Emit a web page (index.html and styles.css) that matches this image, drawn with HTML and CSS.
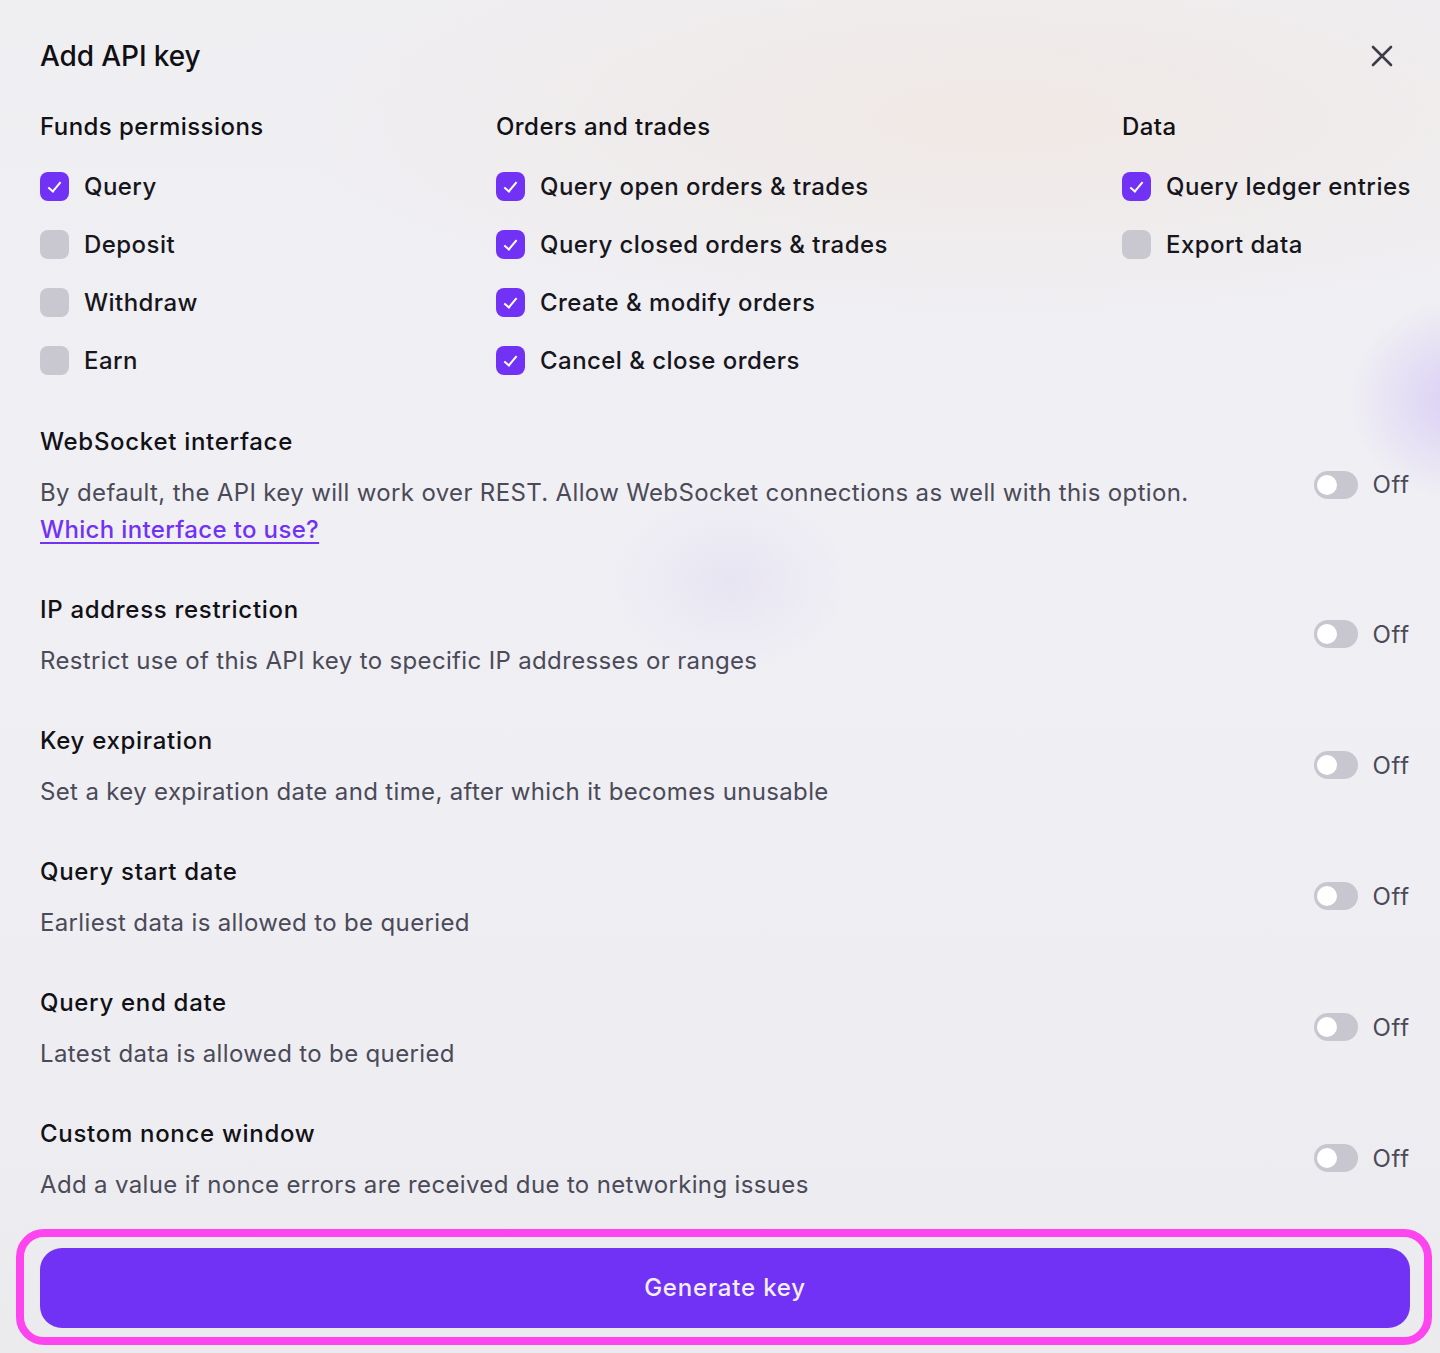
FILE: index.html
```html
<!DOCTYPE html>
<html lang="en">
<head>
<meta charset="utf-8">
<title>Add API key</title>
<link rel="stylesheet" href="styles.css">
</head>
<body>
<div class="modal">
  <header class="modal-header">
    <h1 class="modal-title">Add API key</h1>
    <button class="close" aria-label="Close">
      <svg width="22" height="22" viewBox="0 0 22 22"><path d="M2 2 L20 20 M20 2 L2 20" stroke="#3d3c4a" stroke-width="2.6" stroke-linecap="round" fill="none"/></svg>
    </button>
  </header>

  <div class="perms">
    <div class="col">
      <h2 class="col-title">Funds permissions</h2>
      <ul class="checks">
        <li><span class="cb on"></span>Query</li>
        <li><span class="cb"></span>Deposit</li>
        <li><span class="cb"></span>Withdraw</li>
        <li><span class="cb"></span>Earn</li>
      </ul>
    </div>
    <div class="col">
      <h2 class="col-title">Orders and trades</h2>
      <ul class="checks">
        <li><span class="cb on"></span>Query open orders &amp; trades</li>
        <li><span class="cb on"></span>Query closed orders &amp; trades</li>
        <li><span class="cb on"></span>Create &amp; modify orders</li>
        <li><span class="cb on"></span>Cancel &amp; close orders</li>
      </ul>
    </div>
    <div class="col">
      <h2 class="col-title">Data</h2>
      <ul class="checks">
        <li><span class="cb on"></span>Query ledger entries</li>
        <li><span class="cb"></span>Export data</li>
      </ul>
    </div>
  </div>

  <div class="settings">
    <section class="setting">
      <div class="setting-text">
        <h3 class="setting-title">WebSocket interface</h3>
        <p class="setting-desc">By default, the API key will work over REST. Allow WebSocket connections as well with this option.<br><a href="#" class="link">Which interface to use?</a></p>
      </div>
      <div class="toggle-wrap"><span class="toggle"></span><span class="toggle-label">Off</span></div>
    </section>
    <section class="setting">
      <div class="setting-text">
        <h3 class="setting-title">IP address restriction</h3>
        <p class="setting-desc">Restrict use of this API key to specific IP addresses or ranges</p>
      </div>
      <div class="toggle-wrap"><span class="toggle"></span><span class="toggle-label">Off</span></div>
    </section>
    <section class="setting">
      <div class="setting-text">
        <h3 class="setting-title">Key expiration</h3>
        <p class="setting-desc">Set a key expiration date and time, after which it becomes unusable</p>
      </div>
      <div class="toggle-wrap"><span class="toggle"></span><span class="toggle-label">Off</span></div>
    </section>
    <section class="setting">
      <div class="setting-text">
        <h3 class="setting-title">Query start date</h3>
        <p class="setting-desc">Earliest data is allowed to be queried</p>
      </div>
      <div class="toggle-wrap"><span class="toggle"></span><span class="toggle-label">Off</span></div>
    </section>
    <section class="setting">
      <div class="setting-text">
        <h3 class="setting-title">Query end date</h3>
        <p class="setting-desc">Latest data is allowed to be queried</p>
      </div>
      <div class="toggle-wrap"><span class="toggle"></span><span class="toggle-label">Off</span></div>
    </section>
    <section class="setting">
      <div class="setting-text">
        <h3 class="setting-title">Custom nonce window</h3>
        <p class="setting-desc">Add a value if nonce errors are received due to networking issues</p>
      </div>
      <div class="toggle-wrap"><span class="toggle"></span><span class="toggle-label">Off</span></div>
    </section>
  </div>

  <div class="cta">
    <button class="generate">Generate key</button>
    <span class="highlight"></span>
  </div>
</div>
</body>
</html>
```

FILE: styles.css
```css
* { box-sizing: border-box; }
html, body { margin: 0; padding: 0; }
body {
  width: 1440px;
  min-height: 1353px;
  font-family: "Inter", "Noto Sans", sans-serif;
  color: #111116;
  background:
    radial-gradient(ellipse 110px 100px at 1460px 400px, rgba(210,196,246,0.75), rgba(210,196,246,0) 100%),
    radial-gradient(ellipse 700px 200px at 1000px 120px, rgba(240,232,228,0.9), rgba(240,232,228,0) 100%),
    radial-gradient(ellipse 120px 90px at 730px 580px, rgba(226,222,242,0.6), rgba(226,222,242,0) 100%),
    linear-gradient(180deg, #efeef1 0%, #f0eff4 40%, #eeedf2 80%, #ebebee 100%);
}
.modal {
  padding: 36px 30px 0 40px;
}
.modal-header {
  display: flex;
  align-items: center;
  justify-content: space-between;
  height: 40px;
}
.modal-title {
  margin: 0;
  font-size: 28px;
  font-weight: 500;
  letter-spacing: -0.1px;
  color: #101014;
}
.close {
  border: 0;
  background: none;
  padding: 0;
  width: 22px;
  height: 22px;
  margin-right: 17px;
  display: flex;
}
.perms {
  display: grid;
  grid-template-columns: 456px 626px 1fr;
  margin-top: 35px;
}
.col-title {
  margin: 0;
  font-size: 24px;
  line-height: 32px;
  font-weight: 500;
  color: #111116;
  letter-spacing: 0.45px;
}
.checks {
  list-style: none;
  margin: 23px 0 0;
  padding: 0;
  display: flex;
  flex-direction: column;
  gap: 18.33px;
}
.checks li {
  display: flex;
  align-items: center;
  height: 40px;
  font-size: 24px;
  font-weight: 500;
  color: #16161c;
  white-space: nowrap;
  letter-spacing: 0.45px;
}
.cb {
  width: 29px;
  height: 29px;
  border-radius: 8px;
  background: #c9c8d1;
  margin-right: 15px;
  flex: none;
  position: relative;
}
.cb.on { background: #7132f5; }
.cb.on::after {
  content: "";
  position: absolute;
  left: 11px;
  top: 7px;
  width: 5px;
  height: 11px;
  border: solid #fff;
  border-width: 0 2px 2px 0;
  transform: rotate(40deg);
}
.settings {
  margin-top: 45px;
  display: flex;
  flex-direction: column;
  gap: 46px;
}
.setting {
  display: flex;
  align-items: center;
  justify-content: space-between;
}
.setting-title {
  margin: 0 0 16px;
  font-size: 24px;
  line-height: 32px;
  font-weight: 500;
  color: #111116;
  letter-spacing: 0.7px;
}
.setting-desc {
  margin: 0;
  font-size: 24px;
  line-height: 37px;
  font-weight: 400;
  color: #4a4a58;
  letter-spacing: 0.35px;
}
.link {
  color: #7132f5;
  font-weight: 500;
  text-decoration: underline;
  text-underline-offset: 4px;
  text-decoration-thickness: 2px;
}
.toggle-wrap {
  display: flex;
  align-items: center;
  gap: 14px;
  flex: none;
  margin-bottom: 4px;
}
.toggle {
  width: 44px;
  height: 28px;
  border-radius: 14px;
  background: #c8c7d0;
  position: relative;
}
.toggle::after {
  content: "";
  position: absolute;
  left: 3px;
  top: 4px;
  width: 20px;
  height: 20px;
  border-radius: 50%;
  background: #fff;
}
.toggle-label {
  font-size: 24px;
  color: #4a4a58;
  letter-spacing: 0.8px;
}
.cta {
  position: relative;
  margin-top: 45px;
}
.generate {
  display: block;
  width: 100%;
  height: 80px;
  border: 0;
  border-radius: 22px;
  background: #7132f5;
  color: #f3eefe;
  font-family: "Inter", "Noto Sans", sans-serif;
  font-size: 24px;
  font-weight: 500;
  letter-spacing: 0.8px;
}
.highlight {
  position: absolute;
  left: -24px;
  right: -22px;
  top: -19px;
  bottom: -17px;
  border: 8px solid #fc44ef;
  border-radius: 28px;
  pointer-events: none;
}
```
